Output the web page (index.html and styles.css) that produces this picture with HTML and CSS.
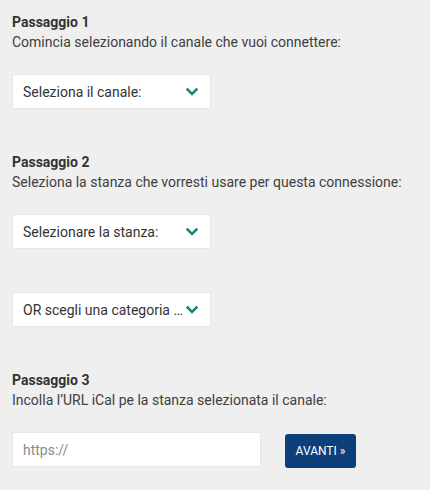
FILE: index.html
```html
<!DOCTYPE html>
<html lang="it">
<head>
<meta charset="utf-8">
<title>Passaggi</title>
<link rel="stylesheet" href="styles.css">
</head>
<body>
<main class="wizard">
  <section class="step">
    <h3 class="step-title">Passaggio 1</h3>
    <p class="step-desc">Comincia selezionando il canale che vuoi connettere:</p>
    <div class="select">
      <span class="select-label">Seleziona il canale:</span>
      <svg class="chev" width="12" height="8" viewBox="0 0 12 8"><polyline points="1.5,1.5 6,6 10.5,1.5" fill="none" stroke="#14897b" stroke-width="2.6" stroke-linecap="square"/></svg>
    </div>
  </section>
  <section class="step">
    <h3 class="step-title">Passaggio 2</h3>
    <p class="step-desc">Seleziona la stanza che vorresti usare per questa connessione:</p>
    <div class="select">
      <span class="select-label">Selezionare la stanza:</span>
      <svg class="chev" width="12" height="8" viewBox="0 0 12 8"><polyline points="1.5,1.5 6,6 10.5,1.5" fill="none" stroke="#14897b" stroke-width="2.6" stroke-linecap="square"/></svg>
    </div>
    <div class="select select-alt">
      <span class="select-label">OR scegli una categoria …</span>
      <svg class="chev" width="12" height="8" viewBox="0 0 12 8"><polyline points="1.5,1.5 6,6 10.5,1.5" fill="none" stroke="#14897b" stroke-width="2.6" stroke-linecap="square"/></svg>
    </div>
  </section>
  <section class="step">
    <h3 class="step-title">Passaggio 3</h3>
    <p class="step-desc">Incolla l’URL iCal pe la stanza selezionata il canale:</p>
    <div class="url-row">
      <input class="url-input" type="text" placeholder="https://">
      <button class="btn-next" type="button">AVANTI »</button>
    </div>
  </section>
</main>
</body>
</html>
```
FILE: styles.css
```css
html, body {
  margin: 0;
  padding: 0;
  background: #efefef;
}
body {
  font-family: Roboto, "Liberation Sans", sans-serif;
  color: #333;
}
.wizard {
  padding: 12px 12px 0 12px;
  display: flex;
  flex-direction: column;
  gap: 43px;
}
.step {
  display: flex;
  flex-direction: column;
  align-items: flex-start;
}
.step-title {
  margin: 0;
  font-size: 14px;
  line-height: 20px;
  font-weight: 700;
  color: #333;
}
.step-desc {
  margin: 0;
  font-size: 14px;
  line-height: 20px;
  color: #404040;
}
.select {
  margin-top: 22px;
  box-sizing: border-box;
  width: 199px;
  height: 35px;
  background: #fff;
  border: 1px solid #e6e6e6;
  display: flex;
  align-items: center;
  justify-content: space-between;
  padding: 0 12px 0 10px;
  font-size: 14px;
  color: #333;
}
.select-alt {
  margin-top: 43px;
}
.chev {
  display: block;
  flex: none;
}
.url-row {
  margin-top: 22px;
  display: flex;
  align-items: flex-start;
  gap: 24px;
}
.url-input {
  box-sizing: border-box;
  width: 249px;
  height: 35px;
  margin: 0;
  background: #fff;
  border: 1px solid #e6e6e6;
  padding: 0 10px;
  font-family: Roboto, "Liberation Sans", sans-serif;
  font-size: 14px;
  color: #333;
  outline: none;
}
.url-input::placeholder {
  color: #8a8a8a;
}
.btn-next {
  margin-top: 2px;
  box-sizing: border-box;
  width: 71px;
  height: 34px;
  background: #0d3f78;
  color: #fff;
  border: none;
  border-radius: 3px;
  font-family: Roboto, "Liberation Sans", sans-serif;
  font-size: 12px;
  padding: 0;
  cursor: pointer;
}
```
